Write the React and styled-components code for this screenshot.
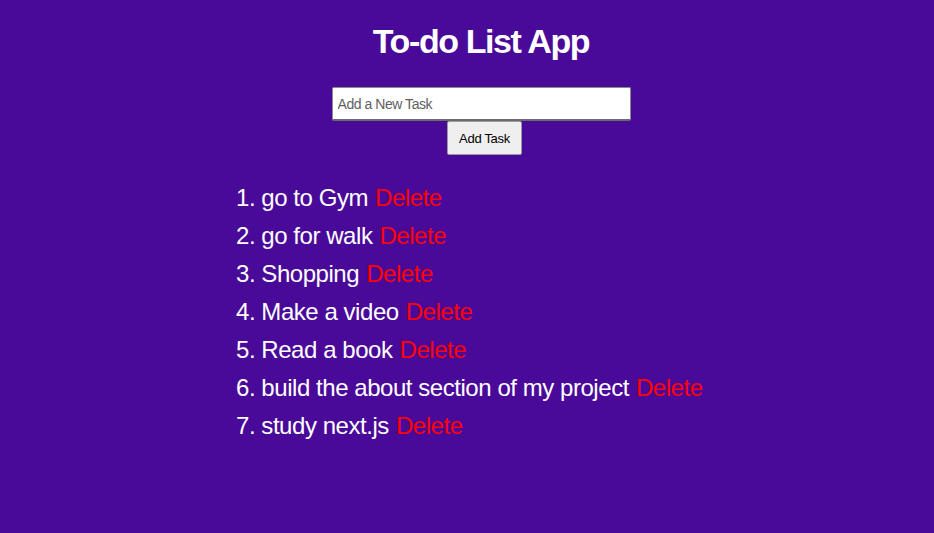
import React, { useState } from "react";
import styled, { createGlobalStyle } from "styled-components";

const GlobalStyle = createGlobalStyle`
  html, body {
    margin: 0;
    padding: 0;
    background: #4a0a99;
  }
  body {
    font-family: "Liberation Sans", Arial, sans-serif;
  }
`;

const Page = styled.div`
  min-height: 100vh;
  box-sizing: border-box;
  background: #4a0a99;
  padding: 21px 0 0 28px;
  display: flex;
  flex-direction: column;
  align-items: center;
  color: #fff;
`;

const Title = styled.h1`
  margin: 0;
  font-size: 34px;
  font-weight: bold;
  line-height: 40px;
  letter-spacing: -1.4px;
  color: #fff;
`;

const Form = styled.form`
  margin-top: 26px;
  display: flex;
  flex-direction: column;
  align-items: center;
`;

const TaskInput = styled.input`
  box-sizing: border-box;
  width: 299px;
  height: 34px;
  padding: 0 5px;
  border: 1px solid #8a8a8a;
  border-bottom: 2px solid #6b6b6b;
  border-radius: 2px;
  background: #fff;
  font-family: "Liberation Sans", Arial, sans-serif;
  font-size: 14px;
  letter-spacing: -0.45px;
  color: #000;
  outline: none;

  &::placeholder {
    color: #5f5f5f;
  }
`;

const AddButton = styled.button`
  box-sizing: border-box;
  width: 75px;
  height: 34px;
  margin-left: 7px;
  padding: 0;
  background: #efefef;
  border: 1px solid #9a9a9a;
  border-radius: 2px;
  font-family: "Liberation Sans", Arial, sans-serif;
  font-size: 13px;
  letter-spacing: -0.3px;
  color: #000;
`;

const TaskList = styled.ol`
  align-self: flex-start;
  margin: 24px 0 0 208px;
  padding: 0;
  list-style: decimal inside;
`;

const TaskItem = styled.li`
  font-size: 24px;
  line-height: 38px;
  letter-spacing: -0.45px;
  color: #fff;
`;

const DeleteButton = styled.button`
  margin-left: 7px;
  padding: 0;
  border: none;
  background: transparent;
  font-family: inherit;
  font-size: 24px;
  line-height: 38px;
  letter-spacing: -0.45px;
  color: #ff0000;
  cursor: pointer;
`;

const initialTasks = [
  "go to Gym",
  "go for walk",
  "Shopping",
  "Make a video",
  "Read a book",
  "build the about section of my project",
  "study next.js",
];

export default function App() {
  const [tasks, setTasks] = useState(initialTasks);
  const [text, setText] = useState("");

  const addTask = (e) => {
    e.preventDefault();
    if (!text.trim()) return;
    setTasks([...tasks, text.trim()]);
    setText("");
  };

  return (
    <>
      <GlobalStyle />
      <Page>
        <Title>To-do List App</Title>
        <Form onSubmit={addTask}>
          <TaskInput
            placeholder="Add a New Task"
            value={text}
            onChange={(e) => setText(e.target.value)}
          />
          <AddButton type="submit">Add Task</AddButton>
        </Form>
        <TaskList>
          {tasks.map((task, i) => (
            <TaskItem key={i}>
              {task}
              <DeleteButton
                type="button"
                onClick={() => setTasks(tasks.filter((_, j) => j !== i))}
              >
                Delete
              </DeleteButton>
            </TaskItem>
          ))}
        </TaskList>
      </Page>
    </>
  );
}
